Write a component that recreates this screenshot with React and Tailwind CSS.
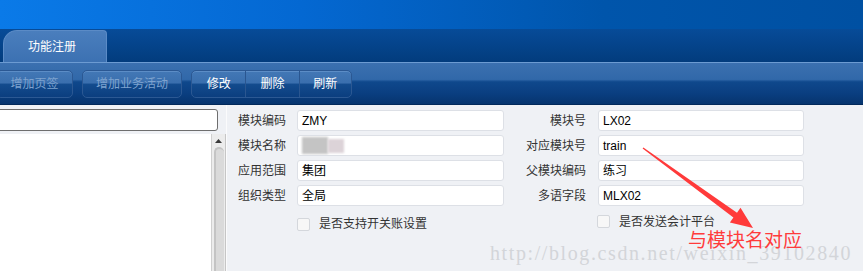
import React from "react";

const cjk = "font-['Liberation_Sans','Noto_Sans_CJK_SC',sans-serif]";

function Field({ value, blurred }) {
  return (
    <div className="h-[21px] flex-1 bg-white border border-[#dde0e6] rounded-[3px] flex items-center px-[4px] text-[12px] text-black overflow-hidden">
      {blurred ? (
        <div className="flex items-center h-full">
          <div className="w-[26px] h-[17px] bg-[#c4c4c4] blur-[1px]" />
          <div className="w-[16px] h-[14px] bg-[#dcd3d8] blur-[1px]" />
        </div>
      ) : (
        value
      )}
    </div>
  );
}

function Row({ l1, v1, l2, v2, blurred }) {
  return (
    <div className="flex items-center h-[21px]">
      <div className="w-[59px] text-[12px] text-[#333]">{l1}</div>
      <div className="w-[207px] flex">
        <Field value={v1} blurred={blurred} />
      </div>
      <div className="w-[82px] text-right text-[12px] text-[#333]">{l2}</div>
      <div className="w-[206px] ml-[12px] flex">
        <Field value={v2} />
      </div>
    </div>
  );
}

function Check({ label }) {
  return (
    <div className="flex items-center">
      <div className="w-[13px] h-[13px] border border-[#d4d7dc] rounded-[2px] bg-[#f7f7f7]" />
      <span className="ml-[9px] text-[12px] text-[#333]">{label}</span>
    </div>
  );
}

function ToolBtn({ children, className, dim }) {
  return (
    <div
      className={
        "h-[28px] rounded-[5px] border border-[#2b5893] bg-[linear-gradient(180deg,#4378b6_0%,#3a6fae_45%,#134b8d_52%,#0b3e7f_100%)] shadow-[inset_0_1px_0_rgba(140,180,230,0.35)] flex items-center justify-center text-[12px] " +
        (dim ? "text-[#7ea3cf] " : "text-white ") +
        className
      }
    >
      {children}
    </div>
  );
}

export default function App() {
  return (
    <div className={"relative w-[863px] h-[271px] overflow-hidden bg-[#eff1f5] flex flex-col " + cjk}>
      {/* top banner */}
      <div className="h-[29px] bg-[linear-gradient(90deg,#0a7ae8_0%,#0468d2_35%,#0055ab_70%,#0050a2_100%)]" />

      {/* tab strip */}
      <div className="h-[33px] bg-[linear-gradient(180deg,#074b98_0%,#023c7d_100%)] flex items-end pl-[3px]">
        <div className="w-[104px] h-[32px] rounded-tl-[14px] rounded-tr-[4px] border-t border-l border-r border-[#5b8bc6] bg-[linear-gradient(180deg,#4a7ebd_0%,#3c71b2_100%)] flex items-center justify-center pr-[6px] text-white text-[12px]">
          功能注册
        </div>
      </div>

      {/* toolbar */}
      <div className="h-[43px] border-t border-[#6c9bd2] border-b border-b-[#01285a] bg-[linear-gradient(180deg,#3b70b0_0%,#3168a9_40%,#0f488c_46%,#0a3e80_75%,#06346e_100%)] flex items-start pt-[7px]">
        <ToolBtn dim className="-ml-[4px] w-[77px]">
          增加页签
        </ToolBtn>
        <ToolBtn dim className="ml-[9px] w-[100px]">
          增加业务活动
        </ToolBtn>
        <ToolBtn className="ml-[9px] w-[161px] !justify-start">
          <div className="w-[54px] text-center">修改</div>
          <div className="w-[1px] h-full bg-[#2a5690]" />
          <div className="w-[53px] text-center">删除</div>
          <div className="w-[1px] h-full bg-[#2a5690]" />
          <div className="w-[52px] text-center">刷新</div>
        </ToolBtn>
      </div>

      {/* body */}
      <div className="flex-1 flex min-h-0">
        {/* left tree panel */}
        <div className="w-[226px] flex flex-col">
          <div className="mt-[4px] -ml-[10px] w-[228px] h-[22px] bg-white border border-[#6e6e6e] rounded-[3px]" />
          <div className="mt-[3px] flex-1 flex">
            <div className="w-[211px] bg-white" />
            <div className="w-[15px] bg-[#ececec] border-l border-[#d0d0d0] border-r border-r-[#c6c6c6] flex flex-col items-center">
              <svg width="9" height="6" viewBox="0 0 9 6" className="mt-[4px]">
                <polygon points="4.5,1 8,5 1,5" fill="#3a3a3a" />
              </svg>
              <div className="mt-[3px] w-[10px] flex-1 rounded-t-[6px] border-t-2 border-l-2 border-[#c4c4c4] bg-[#dadada]" />
            </div>
          </div>
        </div>

        {/* form */}
        <div className="flex-1 border-l border-[#fbfbfc] pl-[11px] pt-[5px] flex flex-col">
          <div className="flex flex-col gap-[4px]">
            <Row l1="模块编码" v1="ZMY" l2="模块号" v2="LX02" />
            <Row l1="模块名称" blurred l2="对应模块号" v2="train" />
            <Row l1="应用范围" v1="集团" l2="父模块编码" v2="练习" />
            <Row l1="组织类型" v1="全局" l2="多语字段" v2="MLX02" />
          </div>
          <div className="flex mt-[9px] h-[13px]">
            <div className="ml-[59px] w-[300px]">
              <Check label="是否支持开关账设置" />
            </div>
            <Check label="是否发送会计平台" />
          </div>
        </div>
      </div>

      {/* watermark */}
      <div className="absolute left-[490px] top-[238px] text-[20px] tracking-[1.6px] text-[#d3d5d9] font-['Liberation_Serif',serif] whitespace-nowrap pointer-events-none">
        http://blog.csdn.net/weixin_39102840
      </div>

      {/* red annotation */}
      <svg className="absolute left-0 top-0 pointer-events-none" width="863" height="271">
        <polygon
          points="642.6,148.5 643.4,147.5 737.0,212.7 740.5,207.8 753,228 729.9,222.4 733.4,217.5"
          fill="#ff3a3a"
        />
      </svg>
      <div className="absolute left-[688px] top-[229px] text-[19px] leading-[24px] text-[#ff3b3b] whitespace-nowrap">
        与模块名对应
      </div>
    </div>
  );
}
